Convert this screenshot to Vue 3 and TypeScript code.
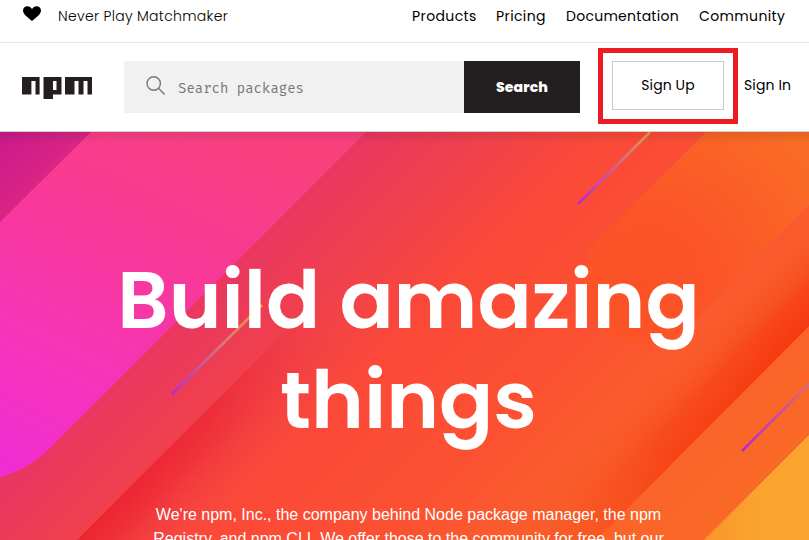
<script setup lang="ts">
interface NavLink { label: string; name: string }

const links: NavLink[] = [
  { label: 'Products', name: 'products' },
  { label: 'Pricing', name: 'pricing' },
  { label: 'Documentation', name: 'documentation' },
  { label: 'Community', name: 'community' },
]
</script>

<template>
  <div class="page">
    <header>
      <div class="topbar">
        <svg class="heart" width="18" height="16" viewBox="0 0 18 16"><path d="M9 15C6 12.400 0 8.800 0 4.600 0 2 1.900.2 4.300.2 6.400.2 8 1.300 9 3 10 1.300 11.600.2 13.700.2 16.100.2 18 2 18 4.600 18 8.800 12 12.400 9 15z" /></svg>
        <span class="tagline">Never Play Matchmaker</span>
        <nav>
          <a v-for="link in links" :key="link.name" :class="link.name">{{ link.label }}</a>
        </nav>
      </div>
      <div class="mainbar">
        <svg class="logo" width="70" height="22" viewBox="0 0 70 22">
          <path fill="#231f20" fill-rule="evenodd" d="M0 0H17.600V17.500H13.500V4H9.400V17.500H0zM21.500 0H39.500V17.500H31V22H21.500zM31 4V13H34.500V4zM43 0H70V17.500H65.500V4H61.500V17.500H56.500V4H52.500V17.500H43z" />
        </svg>
        <form class="search" @submit.prevent>
          <div class="field">
            <svg width="20" height="20" viewBox="0 0 20 20" fill="none" stroke="#777" stroke-width="1.400"><circle cx="7.700" cy="7.500" r="6.700" /><path d="M12.500 12.300 18.600 18.400" /></svg>
            <span>Search packages</span>
          </div>
          <button>Search</button>
        </form>
        <div class="callout"><a class="signup"><span>Sign Up</span></a></div>
        <a class="signin">Sign In</a>
      </div>
    </header>
    <main class="hero">
      <svg class="backdrop" width="809" height="408" viewBox="0 132 809 408">
        <defs>
          <linearGradient id="base" gradientUnits="userSpaceOnUse" x1="40" y1="92" x2="640" y2="692">
            <stop offset="0" stop-color="#c9198d" /><stop offset=".075" stop-color="#da2582" />
            <stop offset=".31" stop-color="#e9375f" /><stop offset=".4" stop-color="#f0404e" />
            <stop offset=".51" stop-color="#fb4938" /><stop offset=".65" stop-color="#fc5032" />
            <stop offset=".78" stop-color="#fa5e2c" /><stop offset=".84" stop-color="#fa6429" /><stop offset="1" stop-color="#f96d24" />
          </linearGradient>
          <linearGradient id="pink" gradientUnits="userSpaceOnUse" x1="60" y1="500" x2="240" y2="132">
            <stop offset="0" stop-color="#f02cd3" /><stop offset=".3" stop-color="#f634bb" />
            <stop offset=".6" stop-color="#f8389c" /><stop offset="1" stop-color="#f9407c" />
          </linearGradient>
          <linearGradient id="red" gradientUnits="userSpaceOnUse" x1="170" y1="447" x2="220" y2="497">
            <stop offset="0" stop-color="#eb2530" /><stop offset=".35" stop-color="#ed2a34" stop-opacity=".75" /><stop offset="1" stop-color="#f44042" stop-opacity="0" />
          </linearGradient>
          <linearGradient id="fadeUp" gradientUnits="userSpaceOnUse" x1="110" y1="510" x2="305" y2="315">
            <stop offset="0" stop-color="#fff" /><stop offset=".45" stop-color="#fff" stop-opacity=".8" /><stop offset="1" stop-color="#fff" stop-opacity="0" />
          </linearGradient>
          <mask id="redMask" maskUnits="userSpaceOnUse" x="0" y="132" width="809" height="408"><path fill="url(#fadeUp)" d="M0 132h809v408H0z" /></mask>
          <radialGradient id="orange" gradientUnits="userSpaceOnUse" cx="644" cy="282" r="205">
            <stop offset="0" stop-color="#fc5126" /><stop offset=".3" stop-color="#fc5328" /><stop offset="1" stop-color="#f96c25" />
          </radialGradient>
          <linearGradient id="ember" gradientUnits="userSpaceOnUse" x1="737" y1="397" x2="681" y2="341">
            <stop offset="0" stop-color="#f53811" /><stop offset=".35" stop-color="#f63d13" stop-opacity=".75" /><stop offset="1" stop-color="#fa5e2c" stop-opacity="0" />
          </linearGradient>
          <linearGradient id="fadeDown" gradientUnits="userSpaceOnUse" x1="780" y1="320" x2="560" y2="540">
            <stop offset="0" stop-color="#fff" /><stop offset=".55" stop-color="#fff" stop-opacity=".75" /><stop offset="1" stop-color="#fff" stop-opacity=".2" />
          </linearGradient>
          <mask id="emberMask" maskUnits="userSpaceOnUse" x="0" y="132" width="809" height="408"><path fill="url(#fadeDown)" d="M0 132h809v408H0z" /></mask>
          <linearGradient id="yellow" x1="0" x2="1"><stop offset="0" stop-color="#f9962b" /><stop offset=".6" stop-color="#faa52f" /></linearGradient>
          <linearGradient id="ray1" gradientUnits="userSpaceOnUse" x1="578" y1="204" x2="650" y2="132"><stop offset="0" stop-color="#b52bd2" /><stop offset=".55" stop-color="#cf6590" /><stop offset="1" stop-color="#dda04c" /></linearGradient>
          <linearGradient id="ray2" gradientUnits="userSpaceOnUse" x1="172" y1="394" x2="262" y2="305"><stop offset="0" stop-color="#b52bd2" /><stop offset=".5" stop-color="#d66e88" /><stop offset="1" stop-color="#e8a038" /></linearGradient>
          <linearGradient id="ray3" gradientUnits="userSpaceOnUse" x1="742" y1="451" x2="832" y2="361"><stop offset="0" stop-color="#b52bd2" /><stop offset="1" stop-color="#dc8066" /></linearGradient>
          <linearGradient id="shade" x1="0" y1="0" x2="0" y2="1"><stop offset="0" stop-opacity=".09" /><stop offset="1" stop-opacity="0" /></linearGradient>
        </defs>
        <path fill="url(#base)" d="M0 132h809v408H0z" />
        <path fill="url(#pink)" d="M91 132h275L55 443Q31 469 0 477V222z" />
        <path fill="url(#red)" mask="url(#redMask)" d="M485 132 77 540h204L689 132z" />
        <path fill="url(#orange)" d="M706 132h103v73L688 326A62 62 0 0 1 600 238z" />
        <path fill="url(#ember)" mask="url(#emberMask)" d="M809 204 473 540h123L809 326z" />
        <path fill="url(#yellow)" d="M809 435 704 540h105z" />
        <g fill="none" stroke-width="2.600"><path stroke="url(#ray1)" d="M578 204 650 132" /><path stroke="url(#ray2)" d="M172 394 262 305" /><path stroke="url(#ray3)" d="M742 451 832 361" /></g>
        <path fill="url(#shade)" d="M0 132h809v12H0z" />
      </svg>
      <div class="copy">
        <h1><span>Build amazing</span><br><span>things</span></h1>
        <p>We're npm, Inc., the company behind Node package manager, the npm<br>Registry, and npm CLI. We offer those to the community for free, but our</p>
      </div>
    </main>
  </div>
</template>

<style>
body { margin: 0; overflow: hidden; }
</style>

<style scoped>
.page { width: 809px; height: 540px; overflow: hidden; background: #fff; color: #000; font-family: Poppins, Inter, sans-serif; font-size: 14px; }
header { height: 131px; border-bottom: 1px solid #d2d2d2; }
.topbar { height: 42px; box-sizing: content-box; border-bottom: 1px solid #e5e5e5; display: flex; align-items: flex-start; }
.heart { margin: 6px 17px 0 23px; flex: none; }
.tagline { width: 354px; line-height: 20px; margin-top: 6px; font-weight: 300; letter-spacing: .31px; white-space: nowrap; }
nav { display: flex; gap: 20px; margin-top: 6px; line-height: 20px; white-space: nowrap; font-weight: 400; }
.products { width: 64px; letter-spacing: .4px; }
.pricing { width: 50px; letter-spacing: .4px; }
.documentation { width: 113px; letter-spacing: .27px; }
.community { width: 87px; letter-spacing: .37px; }
.mainbar { height: 88px; display: flex; align-items: flex-start; }
.logo { margin: 34px 32px 0 22px; flex: none; }
.search { display: flex; width: 456px; height: 52px; margin-top: 18px; flex: none; }
.field { width: 340px; background: #f1f1f1; display: flex; align-items: center; box-sizing: border-box; padding-left: 22px; gap: 12px; color: #777; font: 14px "Fira Mono", "Fira Code", "IBM Plex Mono", "Liberation Mono", monospace; }
.field svg { margin-top: -3px; }
.field span { padding-top: 2px; }
.search button { width: 116px; border: 0; padding: 0; background: #231f20; color: #fff; font: inherit; font-family: Poppins, Inter, sans-serif; font-weight: 800; letter-spacing: .15px; }
.callout { width: 140px; height: 76px; margin: 5px 0 0 18px; box-sizing: border-box; border: 5px solid #ed1c24; padding: 8px 9px; flex: none; }
.signup { display: block; width: 112px; height: 49px; box-sizing: border-box; border: 1px solid #c9c9c9; text-align: center; line-height: 47px; letter-spacing: .1px; }
.signin { margin: 32px 0 0 6px; line-height: 20px; letter-spacing: .12px; white-space: nowrap; }
.hero { display: grid; grid-template-columns: 809px; height: 408px; overflow: hidden; }
.backdrop, .copy { grid-area: 1 / 1; }
.copy { z-index: 1; color: #fff; text-align: center; padding: 118px 0 0 8px; }
h1 { margin: 0; font-size: 80px; font-weight: 600; line-height: 100px; white-space: nowrap; }
p { margin: 53px 0 0; font: 16px/24px "Liberation Sans", Arial, sans-serif; white-space: nowrap; }
</style>
